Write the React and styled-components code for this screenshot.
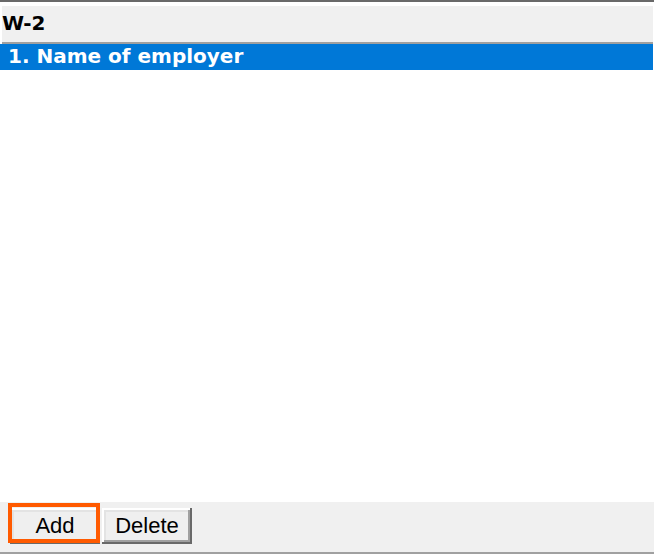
import React from "react";
import styled, { createGlobalStyle } from "styled-components";

const GlobalStyle = createGlobalStyle`
  html, body {
    margin: 0;
    padding: 0;
    background: #ffffff;
  }
  * {
    box-sizing: border-box;
  }
`;

const Panel = styled.div`
  width: 654px;
  height: 554px;
  display: flex;
  flex-direction: column;
  background: #ffffff;
  border-top: 2px solid #696969;
  border-bottom: 2px solid #a0a0a0;
`;

const Header = styled.div`
  margin: 4px 1px 0 2px;
  height: 38px;
  padding: 2px 0 4px;
  background: #f0f0f0;
  border-bottom: 2px solid #a0a0a0;
  font-family: "DejaVu Sans", "Liberation Sans", sans-serif;
  font-weight: bold;
  font-size: 20px;
  line-height: 31px;
  color: #000000;
`;

const List = styled.ul`
  flex: 1;
  margin: 0;
  padding: 0;
  list-style: none;
  background: #ffffff;
`;

const Row = styled.li`
  height: 26px;
  margin-right: 1px;
  padding: 1px 0 0 8px;
  font-family: "DejaVu Sans", "Liberation Sans", sans-serif;
  font-weight: bold;
  font-size: 20px;
  line-height: 22px;
  white-space: nowrap;
  background: ${p => (p.selected ? "#0078d7" : "transparent")};
  color: ${p => (p.selected ? "#ffffff" : "#000000")};
`;

const Toolbar = styled.div`
  height: 50px;
  display: flex;
  align-items: flex-start;
  gap: 2px;
  padding: 6px 0 0 10px;
  background: #f0f0f0;
`;

const Button = styled.button`
  position: relative;
  width: 90px;
  height: 36px;
  padding: 0;
  border: none;
  background: #efefef;
  font-family: "Liberation Sans", Arial, sans-serif;
  font-size: 22px;
  color: #000000;
  cursor: pointer;
  box-shadow: inset -2px -2px #696969, inset 2px 2px #ffffff,
    inset -4px -4px #a0a0a0, inset 4px 4px #e3e3e3;

  &::after {
    content: "";
    display: ${p => (p.highlighted ? "block" : "none")};
    position: absolute;
    top: -5px;
    left: -2px;
    right: 0;
    bottom: 1px;
    border: 4px solid #ff5a00;
    pointer-events: none;
  }
`;

const App = () => {
  const items = ["1. Name of employer"];

  return (
    <>
      <GlobalStyle />
      <Panel>
        <Header>W-2</Header>
        <List>
          {items.map((item, i) => (
            <Row key={item} selected={i === 0}>
              {item}
            </Row>
          ))}
        </List>
        <Toolbar>
          <Button highlighted>Add</Button>
          <Button>Delete</Button>
        </Toolbar>
      </Panel>
    </>
  );
};

export default App;
